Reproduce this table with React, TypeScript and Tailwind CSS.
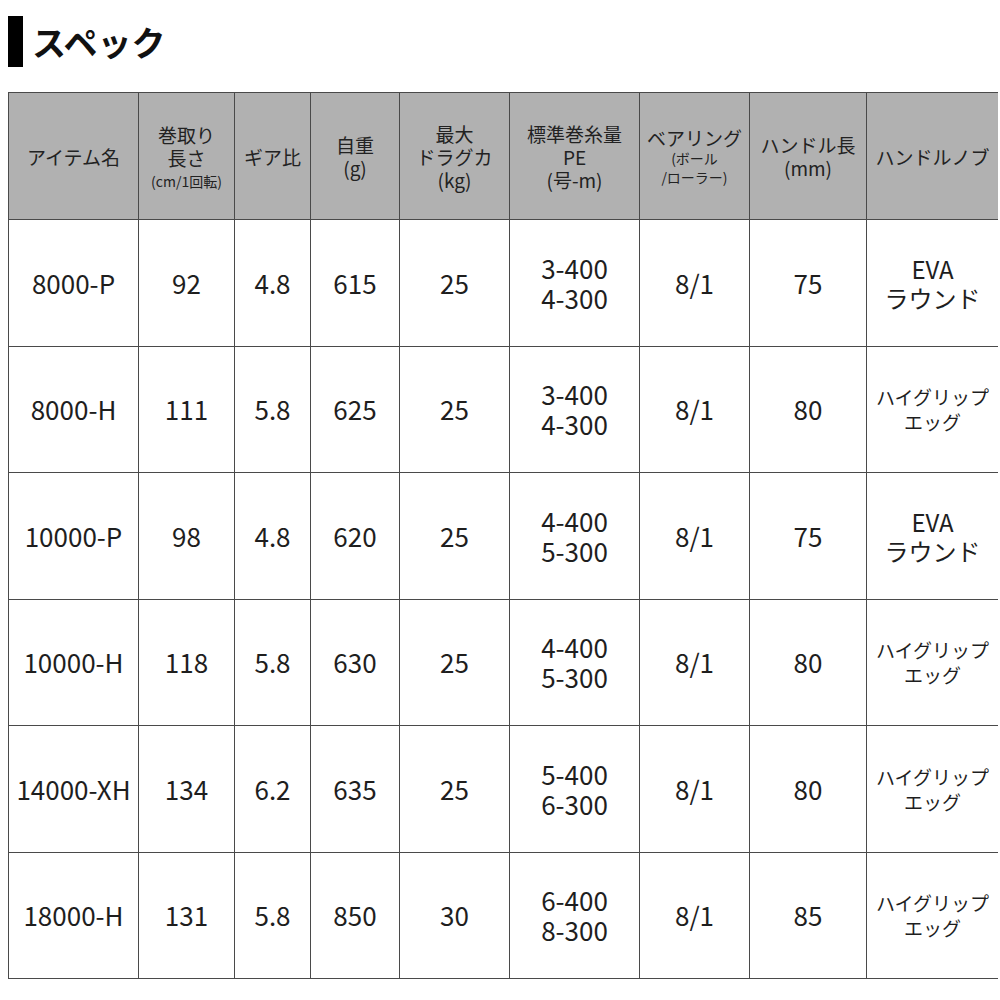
import React from "react";

type Row = {
  name: string;
  length: string;
  gear: string;
  weight: string;
  drag: string;
  pe: string;
  bearing: string;
  handle: string;
  knob: "eva" | "egg";
};

const rows: Row[] = [
  { name: "8000-P", length: "92", gear: "4.8", weight: "615", drag: "25", pe: "3-400\n4-300", bearing: "8/1", handle: "75", knob: "eva" },
  { name: "8000-H", length: "111", gear: "5.8", weight: "625", drag: "25", pe: "3-400\n4-300", bearing: "8/1", handle: "80", knob: "egg" },
  { name: "10000-P", length: "98", gear: "4.8", weight: "620", drag: "25", pe: "4-400\n5-300", bearing: "8/1", handle: "75", knob: "eva" },
  { name: "10000-H", length: "118", gear: "5.8", weight: "630", drag: "25", pe: "4-400\n5-300", bearing: "8/1", handle: "80", knob: "egg" },
  { name: "14000-XH", length: "134", gear: "6.2", weight: "635", drag: "25", pe: "5-400\n6-300", bearing: "8/1", handle: "80", knob: "egg" },
  { name: "18000-H", length: "131", gear: "5.8", weight: "850", drag: "30", pe: "6-400\n8-300", bearing: "8/1", handle: "85", knob: "egg" },
];

const cell =
  "flex flex-col items-center justify-center text-center whitespace-pre-line border-l border-t border-[#4a4a4a]";

function HeadCell({ children }: { children: React.ReactNode }) {
  return (
    <div className={`${cell} bg-[#b1b1b1] text-[19px] leading-[23px] text-[#222]`}>
      {children}
    </div>
  );
}

function BodyCell({ children }: { children: React.ReactNode }) {
  return (
    <div className={`${cell} bg-white text-[26px] leading-[30px] text-[#1e1e1e]`}>
      {children}
    </div>
  );
}

export default function App() {
  return (
    <div
      className="w-[1000px] h-[1000px] bg-white"
      style={{ fontFamily: '"Noto Sans CJK JP", "Noto Sans", sans-serif' }}
    >
      <div className="flex items-center pl-[8px] pt-[16px] gap-[9px]">
        <div className="w-[15px] h-[51px] bg-black" />
        <h1 className="text-[34px] font-bold leading-[51px] text-[#111]">スペック</h1>
      </div>

      <div className="ml-[8px] mt-[25px] w-[990px] grid grid-cols-[130px_96px_76px_89px_110px_130px_110px_117px_132px] grid-rows-[127px_repeat(6,126.5px)] border-r border-b border-[#4a4a4a]">
        <HeadCell>アイテム名</HeadCell>
        <HeadCell>
          <span>{"巻取り\n長さ"}</span>
          <span className="mt-[3px] text-[14px] leading-[18px]">(cm/1回転)</span>
        </HeadCell>
        <HeadCell>ギア比</HeadCell>
        <HeadCell>{"自重\n(g)"}</HeadCell>
        <HeadCell>{"最大\nドラグカ\n(kg)"}</HeadCell>
        <HeadCell>{"標準巻糸量\nPE\n(号-m)"}</HeadCell>
        <HeadCell>
          <span>ベアリング</span>
          <span className="text-[14px] leading-[19px]">{"(ボール\n/ローラー)"}</span>
        </HeadCell>
        <HeadCell>{"ハンドル長\n(mm)"}</HeadCell>
        <HeadCell>ハンドルノブ</HeadCell>

        {rows.map((r) => (
          <React.Fragment key={r.name}>
            <BodyCell>{r.name}</BodyCell>
            <BodyCell>{r.length}</BodyCell>
            <BodyCell>{r.gear}</BodyCell>
            <BodyCell>{r.weight}</BodyCell>
            <BodyCell>{r.drag}</BodyCell>
            <BodyCell>{r.pe}</BodyCell>
            <BodyCell>{r.bearing}</BodyCell>
            <BodyCell>{r.handle}</BodyCell>
            {r.knob === "eva" ? (
              <BodyCell>
                <span className="text-[24px] leading-[29px]">{"EVA\nラウンド"}</span>
              </BodyCell>
            ) : (
              <BodyCell>
                <span className="text-[19px] leading-[25px]">{"ハイグリップ\nエッグ"}</span>
              </BodyCell>
            )}
          </React.Fragment>
        ))}
      </div>
    </div>
  );
}
